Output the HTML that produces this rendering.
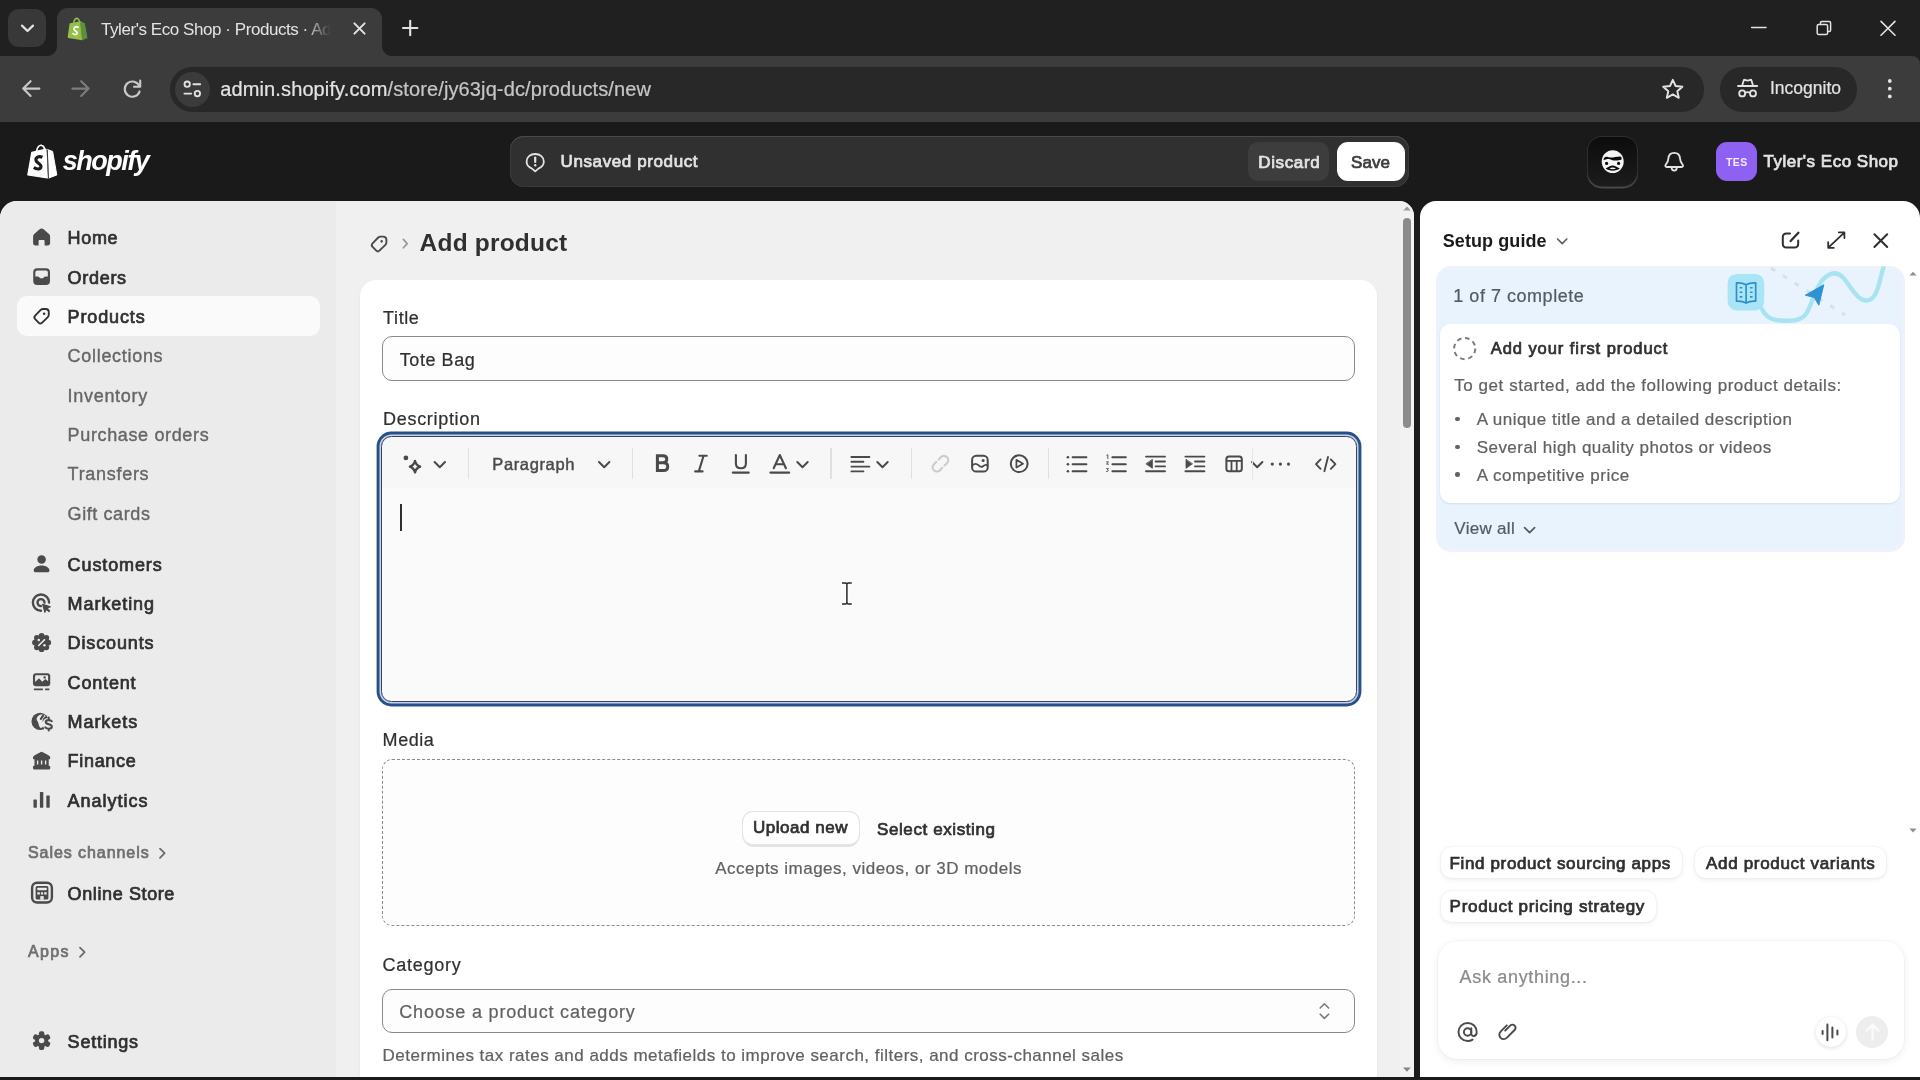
<!DOCTYPE html>
<html>
<head>
<meta charset="utf-8">
<title>Tyler's Eco Shop · Products · Add product</title>
<style>
*{box-sizing:border-box;margin:0;padding:0}
html,body{width:1920px;height:1080px;overflow:hidden;background:#1a1a1a;font-family:"Liberation Sans",sans-serif;}
.a,.t{position:absolute}
.t{white-space:nowrap}
#texts{left:0;top:0;width:1920px;height:1080px;will-change:transform}
#tabtitle{will-change:transform}
svg{display:block;overflow:visible;position:absolute}
/* ---------- browser chrome ---------- */
#tabstrip{left:0;top:0;width:1920px;height:70px;background:#202020}
#tabsearch{left:8px;top:9px;width:38px;height:38px;border-radius:11px;background:#383838}
#tab{left:57px;top:8px;width:325px;height:48px;background:#3c3c3c;border-radius:11px 11px 0 0}
#tab:before,#tab:after{content:"";position:absolute;bottom:0;width:10px;height:10px}
#tab:before{left:-10px;background:radial-gradient(circle at 0 0,transparent 9.5px,#3c3c3c 10.5px)}
#tab:after{right:-10px;background:radial-gradient(circle at 100% 0,transparent 9.5px,#3c3c3c 10.5px)}
#tabtitle{left:100.800px;top:19.7px;font-size:17px;color:#e3e3e3;white-space:nowrap;width:232px;overflow:hidden;letter-spacing:-0.44px;line-height:20px;-webkit-mask-image:linear-gradient(90deg,#000 88%,transparent 99%)}
#toolbar{left:0;top:55.7px;width:1920px;height:66.8px;background:#3c3c3c;border-radius:0 8px 0 0}
#omni{left:170px;top:67.2px;width:1534px;height:44.8px;border-radius:22px;background:#282828}
#siteinfo{left:174.5px;top:72px;width:35px;height:35px;border-radius:50%;background:#3b3b3b}
#incog{left:1720.2px;top:67.2px;width:137.2px;height:44.8px;border-radius:22px;background:#282828}
/* ---------- shopify top bar ---------- */
#topbar{left:0;top:122.5px;width:1920px;height:80px;background:#1a1a1a}
#logotxt{left:61px;top:143px;font-size:27px;font-weight:bold;font-style:italic;color:#fff;letter-spacing:-1.2px;line-height:34px}
#savebar{left:510px;top:136px;width:899px;height:51px;border-radius:14px;background:#303030;box-shadow:inset 0 1px 0 0 #4a4a4a,inset 0 0 0 1px #3a3a3a}
#discard{left:1248px;top:142px;width:81px;height:39px;border-radius:10px;background:#3d3d3d}
#save{left:1337px;top:141.5px;width:68px;height:39.5px;border-radius:11px;background:#fff}
#sidekick{left:1588px;top:137px;width:49px;height:49px;border-radius:14px;background:linear-gradient(180deg,#0c0c0c 0%,#1c1c1c 100%);box-shadow:0 0 0 1px #2e2e2e,0 1.5px 0 1px #4a4a4a}
#avatar{left:1716px;top:142px;width:40.5px;height:39px;border-radius:11px;background:#8f61f2}
/* ---------- frames ---------- */
#frame{left:0;top:200.5px;width:1414.2px;height:876.5px;background:#f0f0f0;border-radius:17px 15px 0 0;overflow:hidden}
#sidebar{left:0;top:0;width:336px;height:877px;background:#ebebeb}
#navsel{left:16.8px;top:95.6px;width:303.2px;height:39.8px;border-radius:10px;background:#fafafa}
#card{left:359.8px;top:79.8px;width:1017.6px;height:820px;border-radius:16px 16px 0 0;background:#fff;box-shadow:0 1px 2px rgba(0,0,0,.08)}
.inp{border:1.3px solid #8a8a8a;border-radius:10px;background:#fdfdfd}
#titleinp{left:382px;top:135.7px;width:973px;height:44.4px}
#editor{left:380.7px;top:235.4px;width:976px;height:266.6px;border-radius:10.5px;border:1.4px solid #3a4252;box-shadow:0 0 0 1.5px #c2d4f0,0 0 0 4.4px #294f87}
#edbg{left:381.2px;top:236px;width:975px;height:265.5px;border-radius:10px;background:#fafafa}
#edtb{left:381.2px;top:236px;width:975px;height:51.5px;background:#f7f7f7;border-radius:10px 10px 0 0}
.sep{width:1.3px;height:31px;top:247.4px;background:#e0e0e0}
#caret{left:400px;top:303px;width:1.6px;height:27px;background:#303030}
#media{left:382px;top:558px;width:973.4px;height:167px;border:1.3px dashed #8c8c8c;border-radius:10px;background:#fdfdfd}
#upbtn{left:743px;top:611px;width:115.5px;height:33px;border-radius:10px;background:#fff;box-shadow:0 0 0 1px #e3e3e3,0 1.5px 0 0 #ccc, inset 0 -1px 0 #e6e6e6}
#catinp{left:382px;top:788px;width:973px;height:44.4px}
#sbtrack{left:1400px;top:0;width:14.2px;height:877px;background:#f2f2f2}
#sbthumb{left:1403px;top:17.2px;width:8.3px;height:210.5px;border-radius:4.2px;background:#8c8c8c}
#panel{left:1419.9px;top:200.5px;width:500.1px;height:876.5px;background:#fff;border-radius:16px 17px 0 0;overflow:hidden}
#guide{left:16.4px;top:65.9px;width:468.6px;height:285.6px;border-radius:15px;background:#e9f3fd;border:3.4px solid #eff2fb}
#gcard{left:20.1px;top:123.5px;width:460px;height:179.3px;border-radius:11px;background:#fff;box-shadow:0 1px 2px rgba(40,80,120,.12)}
.chip{height:31px;border-radius:10px;background:#fff;box-shadow:0 0 1.5px rgba(0,0,0,.10),0 1.5px 5px rgba(0,0,0,.08)}
#ask{left:18.1px;top:740.3px;width:465.8px;height:118.5px;border-radius:20px;background:#fff;box-shadow:0 0 0 1px rgba(0,0,0,.025),0 2px 8px rgba(0,0,0,.08)}
#voice{left:395.8px;top:816.9px;width:30px;height:30px;border-radius:50%;background:#fff;box-shadow:0 1px 4px rgba(0,0,0,.14)}
#send{left:436.6px;top:815.5px;width:32px;height:32px;border-radius:50%;background:#ededed}
.bul{width:4.6px;height:4.6px;border-radius:50%;background:#616161}
</style>
</head>
<body>
<!-- ======= Browser chrome ======= -->
<div id="tabstrip" class="a"></div>
<div id="tabsearch" class="a"></div>
<div id="tab" class="a"></div>
<div id="tabtitle" class="a">Tyler's Eco Shop · Products · Add</div>
<div id="toolbar" class="a"></div>
<div id="omni" class="a"></div>
<div id="siteinfo" class="a"></div>
<div id="incog" class="a"></div>

<!-- ======= Shopify top bar ======= -->
<div id="topbar" class="a"></div>
<div id="savebar" class="a"></div>
<div id="discard" class="a"></div>
<div id="save" class="a"></div>
<div id="sidekick" class="a"></div>
<div id="avatar" class="a"></div>

<!-- ======= Main frame (sidebar + content) ======= -->
<div id="frame" class="a">
  <div id="sidebar" class="a"></div>
  <div id="navsel" class="a"></div>
  <div id="card" class="a"></div>
  <div id="titleinp" class="a inp"></div>
  <div id="edbg" class="a"></div>
  <div id="edtb" class="a"></div>
  <div id="editor" class="a"></div>
  <div class="a sep" style="left:467.8px"></div>
  <div class="a sep" style="left:632px"></div>
  <div class="a sep" style="left:830.4px"></div>
  <div class="a sep" style="left:910.9px"></div>
  <div class="a sep" style="left:1047.8px"></div>
  <div id="caret" class="a"></div>
  <div id="media" class="a"></div>
  <div id="upbtn" class="a"></div>
  <div id="catinp" class="a inp"></div>
  <div id="sbtrack" class="a"></div>
  <div id="sbthumb" class="a"></div>
</div>

<!-- ======= Right panel ======= -->
<div id="panel" class="a">
  <div id="guide" class="a"></div>
  <!--GUIDEART-->
  <div id="gcard" class="a"></div>
  <div class="a bul" style="left:35.4px;top:216.2px"></div>
  <div class="a bul" style="left:35.4px;top:244.1px"></div>
  <div class="a bul" style="left:35.4px;top:271.9px"></div>
  <div class="a chip" style="left:20.7px;top:646.9px;width:241.1px"></div>
  <div class="a chip" style="left:275.3px;top:646.9px;width:191px"></div>
  <div class="a chip" style="left:20.7px;top:690.2px;width:215.4px"></div>
  <div id="ask" class="a"></div>
  <div id="voice" class="a"></div>
  <div id="send" class="a"></div>
</div>

<svg id="ico1" width="1920" height="1080" viewBox="0 0 1920 1080" style="left:0;top:0" fill="none" stroke-linecap="round" stroke-linejoin="round">
<!-- tab search chevron -->
<path d="M22 25.6 L27.5 31 L33 25.6" stroke="#e3e3e3" stroke-width="2.2"/>
<!-- favicon: shopify bag -->
<g transform="translate(0 1.300) scale(1 1.050)">
<path d="M70.2 21.6 L80.6 19.6 L82.4 36.4 L68.4 34.2 Z" fill="#95bf47" stroke="#95bf47" stroke-width="1.4"/>
<path d="M80.6 19.6 L84.4 21.2 L87 34.8 L82.4 36.4 Z" fill="#5e8e3e" stroke="#5e8e3e" stroke-width="1"/>
<path d="M73.6 21 C73.8 17.6 76 15.8 77.6 16.4 C79 17 79.6 19 79.8 20.4" stroke="#95bf47" stroke-width="1.5"/>
<path d="M78 24.6 C75.4 23.6 73.6 25 74 26.6 C74.4 28.2 77.4 28.4 77.2 30.4 C77 32 74.6 32 73 30.8" stroke="#fff" stroke-width="1.7"/>
</g>
<!-- tab close -->
<path d="M354.4 23.4 L364.6 33.6 M364.6 23.4 L354.4 33.6" stroke="#e3e3e3" stroke-width="2"/>
<!-- new tab plus -->
<path d="M403 28 H417.4 M410.2 20.8 V35.2" stroke="#e3e3e3" stroke-width="2.1"/>
<!-- window controls -->
<path d="M1751.6 27.4 H1766" stroke="#e3e3e3" stroke-width="1.5"/>
<rect x="1817.2" y="24.4" width="10.4" height="10.2" rx="1.6" stroke="#e3e3e3" stroke-width="1.5"/>
<path d="M1820.4 24 V23 Q1820.4 21.6 1821.8 21.6 H1829.2 Q1830.6 21.6 1830.6 23 V30.2 Q1830.6 31.6 1829.2 31.6 H1828.2" stroke="#e3e3e3" stroke-width="1.5"/>
<path d="M1881 21.4 L1895 35.2 M1895 21.4 L1881 35.2" stroke="#e3e3e3" stroke-width="1.6"/>
<!-- back -->
<path d="M39.4 88.6 H23.4 M30.6 81.2 L23.2 88.6 L30.6 96" stroke="#c9c9c9" stroke-width="2.1"/>
<!-- forward (disabled) -->
<path d="M72.4 88.6 H88.4 M81.2 81.2 L88.6 88.6 L81.2 96" stroke="#7d7d7d" stroke-width="2.1"/>
<!-- reload -->
<path d="M139.4 86.2 A7.6 7.6 0 1 0 139.6 91.4" stroke="#c9c9c9" stroke-width="2.1"/>
<path d="M140.2 80.6 V86.8 H134" stroke="#c9c9c9" stroke-width="2.1"/>
<!-- site info (tune) -->
<circle cx="187.2" cy="84.2" r="2.7" stroke="#e3e3e3" stroke-width="1.8"/>
<path d="M193.4 84.2 H200.2" stroke="#e3e3e3" stroke-width="1.9"/>
<path d="M184.4 93.6 H191.2" stroke="#e3e3e3" stroke-width="1.9"/>
<circle cx="197.4" cy="93.6" r="2.7" stroke="#e3e3e3" stroke-width="1.8"/>
<!-- star -->
<path d="M1672.8 79.8 L1675.6 86 L1682.4 86.7 L1677.3 91.2 L1678.8 97.8 L1672.8 94.4 L1666.8 97.8 L1668.3 91.2 L1663.2 86.7 L1670 86 Z" stroke="#e3e3e3" stroke-width="1.9"/>
<!-- incognito -->
<g stroke="#e3e3e3" stroke-width="1.8">
<path d="M1742.2 85.6 L1743.8 80.2 Q1744 79.6 1744.8 79.8 L1747.6 80.6 L1750.4 79.8 Q1751.2 79.6 1751.4 80.2 L1753 85.6"/>
<path d="M1738 86 H1757.2"/>
<circle cx="1742.2" cy="93.4" r="3"/>
<circle cx="1753" cy="93.4" r="3"/>
<path d="M1745.2 92.8 Q1747.6 91.6 1750 92.8"/>
</g>
<!-- menu dots -->
<circle cx="1889.8" cy="81" r="1.9" fill="#e3e3e3"/><circle cx="1889.8" cy="88.7" r="1.9" fill="#e3e3e3"/><circle cx="1889.8" cy="96.4" r="1.9" fill="#e3e3e3"/>

<!-- ===== shopify top bar ===== -->
<!-- bag logo -->
<g>
<path d="M31.8 152.4 L46 149.2 L47.4 178 L27.8 174.8 Z" fill="#fff" stroke="#fff" stroke-width="1.2"/>
<path d="M47.6 149.6 L52.6 151.4 L56.8 175 L48.8 178 Z" fill="#fff" stroke="#fff" stroke-width="1"/>
<path d="M36.6 151.2 C37 147.2 39.6 144.6 41.8 145.4 C43.6 146 44.6 148.2 45 150.6" stroke="#fff" stroke-width="1.7"/>
<path d="M47.3 150 L48.4 178" stroke="#1a1a1a" stroke-width="0.9"/>
<path d="M42.4 157.2 C38.6 155.6 35.4 157.6 36 160.4 C36.6 163.2 41.4 163.6 41 166.8 C40.6 169.6 36.6 169.6 33.8 167.6" stroke="#1a1a1a" stroke-width="3.1" stroke-linecap="butt"/>
</g>
<!-- unsaved icon -->
<g stroke="#e3e3e3">
<path d="M535.2 154 C540.2 154 543.8 157.2 543.8 161.6 C543.8 165.4 541.2 167.6 538.4 168.6 L535.2 171.4 L532 168.6 C529.2 167.6 526.6 165.4 526.6 161.6 C526.6 157.2 530.2 154 535.2 154 Z" stroke-width="1.8"/>
<path d="M535.2 157.6 V162" stroke-width="2.2"/>
<circle cx="535.2" cy="165.3" r="1.2" fill="#e3e3e3" stroke="none"/>
</g>
<!-- sidekick face -->
<g>
<ellipse cx="1612.7" cy="161.6" rx="11" ry="11.4" fill="#f4f4f4"/>
<path d="M1603.6 159.2 C1604.2 156.8 1606 156.4 1607 156.8 C1610.6 158.6 1616.6 156.2 1620.4 156.4 C1621.6 156.6 1621.8 158.4 1621.6 159.4 C1618 160.8 1612.6 161 1610 159.2 C1608 158.6 1605.2 159.4 1603.6 160.2 Z" fill="#0c0c0c"/>
<circle cx="1606.6" cy="163.4" r="1.6" fill="#0c0c0c"/>
<circle cx="1618.6" cy="163.4" r="1.6" fill="#0c0c0c"/>
<path d="M1605.6 168.6 C1608 167.2 1610.6 165.8 1612.6 165.6 C1614.6 165.8 1617.4 167.2 1619.8 168.6 C1616.4 171.4 1609 171.4 1605.6 168.6 Z" fill="#0c0c0c"/>
<path d="M1609.4 168.4 Q1612.7 166.8 1616 168.4 Q1612.7 170 1609.4 168.4 Z" fill="#f4f4f4"/>
</g>
<!-- bell -->
<g stroke="#e3e3e3" stroke-width="1.8">
<path d="M1674.2 152.8 C1678 152.8 1679.8 155.4 1680 158.4 C1680.2 161.4 1680.8 162.8 1682.6 164.6 C1683.6 165.8 1683 167 1681.6 167 H1666.8 C1665.4 167 1664.8 165.8 1665.8 164.6 C1667.6 162.8 1668.2 161.4 1668.4 158.4 C1668.6 155.4 1670.4 152.8 1674.2 152.8 Z"/>
<path d="M1671.6 167.6 C1671.6 169.4 1672.8 170.6 1674.2 170.6 C1675.6 170.6 1676.8 169.4 1676.8 167.6"/>
</g>
</svg>

<svg id="ico2" width="1920" height="1080" viewBox="0 0 1920 1080" style="left:0;top:0" fill="none" stroke-linecap="round" stroke-linejoin="round">
<defs>
<path id="tag" fill-rule="evenodd" d="M13 8a1 1 0 1 1-2 0 1 1 0 0 1 2 0Z M11.276 3.5a3.75 3.75 0 0 0-2.701 1.149l-4.254 4.417a2.75 2.75 0 0 0 .036 3.852l2.898 2.898a2.5 2.5 0 0 0 3.502.033l4.747-4.571a3.25 3.25 0 0 0 .996-2.341v-2.187a3.25 3.25 0 0 0-3.25-3.25h-1.974Zm-1.62 2.19a2.25 2.25 0 0 1 1.62-.69h1.974c.966 0 1.75.784 1.75 1.75v2.187c0 .475-.194.93-.536 1.26l-4.747 4.572a1 1 0 0 1-1.401-.014l-2.898-2.898a1.25 1.25 0 0 1-.016-1.75l4.253-4.418Z"/>
<path id="chev" d="M0 0 L5.2 5.2 L10.4 0"/>
</defs>
<!-- ===== sidebar icons (20-unit glyphs at 1.25x) ===== -->
<g fill="#4a4a4a">
<!-- home -->
<g transform="translate(29.1 224.5) scale(1.25)"><path d="M10 3.1c.6 0 1.1.3 1.6.7l4.3 3.7c.6.5.9 1.2.9 2V15c0 1-.8 1.8-1.8 1.8h-2.6v-3.5c0-.5-.4-.9-.9-.9h-3c-.5 0-.9.4-.9.9v3.500H5c-1 0-1.800-.8-1.800-1.800V9.500c0-.8.3-1.500.9-2l4.300-3.700c.5-.4 1-.7 1.600-.7Z"/></g>
<!-- orders -->
<g transform="translate(29.1 264.2) scale(1.25)"><path fill-rule="evenodd" d="M6.5 3.3a3.200 3.200 0 0 0-3.200 3.200v7a3.200 3.200 0 0 0 3.200 3.200h7a3.200 3.200 0 0 0 3.200-3.200v-7a3.200 3.200 0 0 0-3.200-3.200h-7Zm-1.500 3.200A1.500 1.500 0 0 1 6.500 5h7A1.500 1.500 0 0 1 15 6.500v3.300h-1.900a1.500 1.500 0 0 0-1.060.44l-.5.5a1.500 1.500 0 0 1-1.060.44h-.96a1.500 1.500 0 0 1-1.060-.44l-.5-.5a1.500 1.500 0 0 0-1.060-.44H5V6.500Z"/></g>
<!-- products tag -->
<g transform="translate(29.1 303.700) scale(1.25)" fill="#303030"><use href="#tag"/></g>
<!-- customers -->
<g transform="translate(29.1 551.3) scale(1.25)"><circle cx="10" cy="6.500" r="3.400"/><path d="M3.700 15.300c0-2.300 2.800-4 6.300-4s6.300 1.700 6.300 4c0 .9-.7 1.500-1.500 1.500H5.200c-.8 0-1.500-.6-1.500-1.500Z"/></g>
<!-- marketing -->
<g transform="translate(29.1 590.700) scale(1.25)" fill="none" stroke="#4a4a4a" stroke-width="1.900"><path d="M16 9.500a6.500 6.500 0 1 0-6.500 6.500"/><path d="M12.300 9.500a2.800 2.800 0 1 0-2.800 2.800"/><path d="M10.800 10.800l6.200 2.100-2.600 1.200 2 2-.6.600-2-2-1.200 2.600-1.800-6.500Z" fill="#4a4a4a" stroke-width=".9"/></g>
<!-- discounts -->
<g transform="translate(29.1 630.100) scale(1.25)"><circle cx="10" cy="10" r="5.700"/><g id="lobes"><circle cx="10" cy="4.700" r="2.300"/><circle cx="13.750" cy="6.250" r="2.300"/><circle cx="15.300" cy="10" r="2.300"/><circle cx="13.750" cy="13.750" r="2.300"/><circle cx="10" cy="15.300" r="2.300"/><circle cx="6.250" cy="13.750" r="2.300"/><circle cx="4.700" cy="10" r="2.300"/><circle cx="6.250" cy="6.250" r="2.300"/></g><path d="M7.700 12.300l4.600-4.600" stroke="#ebebeb" stroke-width="1.300"/><circle cx="7.700" cy="7.900" r="1" fill="#ebebeb"/><circle cx="12.300" cy="12.100" r="1" fill="#ebebeb"/></g>
<!-- content -->
<g transform="translate(29.1 669.500) scale(1.25)"><rect x="3.100" y="2.900" width="13.800" height="10.400" rx="2.400"/><path d="M4.800 5.500c0-.5.400-.9.900-.9h8.600c.5 0 .9.400.9.900v3.900l-2.200-1.900-2.500 2.300-2.600-2.900-3.100 3.100Z" fill="#ebebeb"/><circle cx="12.400" cy="6.300" r=".95"/><path d="M3.800 15.900h7.200M12.800 15.900h3.400" stroke="#4a4a4a" stroke-width="1.300" stroke-linecap="butt"/></g>
<!-- markets -->
<g transform="translate(29.1 708.900) scale(1.25)"><circle cx="8.800" cy="10" r="6.900"/><path d="M9.600 4.500c1.700-.3 3.600.3 3.700 1.200-1 .9-2.200 1.900-2.500 3.200-.3 1.400.7 2.300.6 3.700-.1 1.200-.8 2.500-2.100 2.700-1.500-.9-1.400-2.700-1.900-4.100-.4-1.300-1.600-2-1.400-3.500.2-1.500 1.900-2.900 3.600-3.200Z" fill="#ebebeb"/><path d="M11.300 5.200l-1.900 2.800" stroke="#4a4a4a" stroke-width="1.700"/><circle cx="15.600" cy="12.100" r="5" fill="#ebebeb"/><path d="M18.100 9.900c-.8-1.200-4.700-1.500-4.800.6-.1 2.300 5 1.300 4.900 3.700-.1 2.300-4.100 2-5.200.6M15.700 7v1.300M15.700 16v1.300" fill="none" stroke="#4a4a4a" stroke-width="1.650"/></g>
<!-- finance -->
<g transform="translate(29.1 748.300) scale(1.25)"><path d="M9.400 2.900a1.200 1.200 0 0 1 1.200 0c2.600 1.300 4.800 2.400 5.700 3.300.4.300.6.700.6 1.100v.7c0 .4-.3.700-.7.700H3.800c-.4 0-.7-.3-.7-.7v-.7c0-.4.200-.8.600-1.100.9-.9 3.100-2 5.700-3.300Z"/><rect x="4.300" y="8.400" width="11.400" height="5.800"/><path d="M6.800 9.800v3.200M10 9.800v3.200M13.200 9.800v3.200" stroke="#ebebeb" stroke-width="1.100" stroke-linecap="butt"/><rect x="3.100" y="13.900" width="13.800" height="3" rx=".9"/></g>
<!-- analytics -->
<g transform="translate(29.1 787.700) scale(1.25)"><rect x="3.500" y="9.500" width="2.700" height="6.500" rx=".5"/><rect x="8.650" y="3.400" width="2.700" height="12.600" rx=".5"/><rect x="13.800" y="6.300" width="2.700" height="9.700" rx=".5"/></g>
<!-- settings gear -->
<g transform="translate(41.6 1040.600)"><g id="teeth"><rect x="-2.700" y="-9.300" width="5.400" height="18.600" rx="1.900"/><rect x="-2.700" y="-9.300" width="5.400" height="18.600" rx="1.900" transform="rotate(60)"/><rect x="-2.700" y="-9.300" width="5.400" height="18.600" rx="1.900" transform="rotate(120)"/></g><circle r="6.600"/><circle r="2.700" fill="#ebebeb"/></g>
</g>
<!-- online store -->
<g>
<rect x="32.100" y="882.700" width="19.800" height="19.800" rx="5" stroke="#4a4a4a" stroke-width="2.400"/>
<rect x="35.600" y="886.100" width="12.800" height="13.400" rx="1.600" fill="#4a4a4a"/>
<rect x="37.300" y="887.700" width="9.400" height="2.500" rx=".600" fill="#ebebeb"/>
<path d="M37.300 892.200h9.400v2.300h-9.400Z" fill="#ebebeb"/>
<path d="M40.400 892.200v2.300M43.600 892.200v2.300" stroke="#4a4a4a" stroke-width="1.100"/>
<rect x="40.300" y="896.100" width="3.400" height="3.600" fill="#ebebeb"/>
</g>
<!-- sales channels / apps chevrons -->
<path d="M160 848.600l4.600 4.600-4.600 4.600" stroke="#6b6b6b" stroke-width="1.800"/>
<path d="M80 947.600l4.600 4.600-4.600 4.600" stroke="#6b6b6b" stroke-width="1.800"/>

<!-- ===== breadcrumb ===== -->
<g transform="translate(366.400 231.200) scale(1.27)" fill="#4a4a4a"><use href="#tag"/></g>
<path d="M403.400 239.400l3.800 4.200-3.800 4.200" stroke="#9a9a9a" stroke-width="1.700"/>

<!-- ===== editor toolbar ===== -->
<g stroke="#4a4a4a" stroke-width="2">
<!-- magic sparkle -->
<path d="M415 461c.7 3 2.100 4.500 5.100 5.700-3 1.200-4.400 2.700-5.100 5.700-.7-3-2.100-4.500-5.100-5.700 3-1.200 4.400-2.700 5.100-5.700Z" stroke-width="2.400"/>
<circle cx="405.900" cy="457.900" r="2.350" fill="#4a4a4a" stroke="none"/>
<use href="#chev" transform="translate(434.600 462)" />
<use href="#chev" transform="translate(599 462)" />
<!-- B -->
<path d="M657.400 455.700h5.400c2.500 0 4 1.400 4 3.500s-1.500 3.600-4 3.600h-5.400h6.100c2.700 0 4.200 1.600 4.200 3.900s-1.500 3.900-4.200 3.900h-6.100Z" stroke-width="3" stroke-linejoin="miter"/>
<!-- I -->
<path d="M699.400 455.800h7.400M695.200 471.400h7.400M703.600 455.800l-4.800 15.600" stroke-width="2.100"/>
<!-- U -->
<path d="M735.900 455v8.400c0 3 1.900 4.800 5 4.800s5-1.800 5-4.800V455M732.800 472.600h16" stroke-width="2.100"/>
<!-- A -->
<path d="M773.700 468.200l6.100-13.200 6.100 13.200M775.900 464.200h7.800M770.400 472.600h18.800" stroke-width="2.100"/>
<use href="#chev" transform="translate(797.300 462)" />
<!-- align -->
<path d="M851.400 457h18M851.400 461.800h12M851.400 466.600h18M851.400 471.400h12" stroke-width="1.900"/>
<use href="#chev" transform="translate(877.300 462)" />
</g>
<!-- link (disabled) -->
<g stroke="#cccccc" stroke-width="2.100">
<path d="M938.600 459.600l2.200-2.400c1.700-1.800 4.400-1.800 6.100-.1s1.700 4.400 0 6.100l-2.400 2.300"/>
<path d="M942.200 467.800l-2.200 2.400c-1.700 1.800-4.400 1.800-6.100.1s-1.700-4.400 0-6.100l2.400-2.300"/>
</g>
<g stroke="#4a4a4a" stroke-width="2">
<!-- image -->
<rect x="972.100" y="455.800" width="15.600" height="15.800" rx="4.200"/>
<path d="M972.400 465.200c2.200-1.800 4.200-1.800 6 0s3 2.400 4.600 1 3-1.800 4.600-.8" stroke-width="1.800"/>
<circle cx="983.100" cy="460.500" r="1.500" fill="#4a4a4a" stroke="none"/>
<!-- play -->
<circle cx="1019.200" cy="463.700" r="8.400"/>
<path d="M1016.400 459.800l6.600 3.900-6.600 3.900Z" stroke-width="1.700"/>
<!-- bullet list -->
<path d="M1072.600 457.200h13.800M1072.600 464.200h13.800M1072.600 471.200h13.800"/>
<circle cx="1067.900" cy="457.200" r="1.300" fill="#4a4a4a" stroke="none"/><circle cx="1067.900" cy="464.200" r="1.300" fill="#4a4a4a" stroke="none"/><circle cx="1067.900" cy="471.200" r="1.300" fill="#4a4a4a" stroke="none"/>
<!-- numbered list -->
<path d="M1112.400 457.200h13.400M1112.400 464.200h13.400M1112.400 471.200h13.400"/>
<path d="M1106.800 455.400l1-.8v4M1106.600 461.800h1.800l-1.800 2.400h1.900M1106.600 468.600h1.800l-1 1.300c1.300 0 1.300 1.900-.9 1.700" stroke-width=".9"/>
<!-- outdent -->
<path d="M1146 456.600h19M1155.600 461.500h9.400M1155.600 466.400h9.400M1146 471.300h19" stroke-width="1.900"/>
<path d="M1152.400 459.700v8.600l-6.200-4.300Z" fill="#4a4a4a" stroke-width=".8"/>
<!-- indent -->
<path d="M1185.400 456.600h19M1195 461.500h9.400M1195 466.400h9.400M1185.400 471.300h19" stroke-width="1.900"/>
<path d="M1186 459.700v8.600l6.200-4.300Z" fill="#4a4a4a" stroke-width=".8"/>
<!-- table -->
<rect x="1226.400" y="456.500" width="15.400" height="14.800" rx="2.600"/>
<path d="M1226.600 460.800h15M1231.500 461v10M1236.700 461v10" stroke-width="1.800"/>
<use href="#chev" transform="translate(1252 462)" />
<!-- more -->
<circle cx="1272.300" cy="464.100" r="1.600" fill="#4a4a4a" stroke="none"/><circle cx="1280.400" cy="464.100" r="1.600" fill="#4a4a4a" stroke="none"/><circle cx="1288.500" cy="464.100" r="1.600" fill="#4a4a4a" stroke="none"/>
<!-- code -->
<path d="M1320.600 459.400l-4.600 4.700 4.600 4.700M1330.800 459.400l4.600 4.700-4.600 4.700M1328 457l-3.600 14.200" stroke-width="1.900"/>
</g>
<path d="M1252.500 448v31" stroke="#e6e6e6" stroke-width="1"/>
<!-- category select icon -->
<path d="M1320.200 1008l4.200-4.200 4.200 4.200M1320.200 1014.200l4.200 4.200 4.200-4.200" stroke="#7a7a7a" stroke-width="1.600"/>
<!-- scrollbar arrows -->
<path d="M1403.200 210.600l3.800-4.200 3.800 4.200Z" fill="#9c9c9c"/>
<path d="M1403 1067.600l3.900 4.200 3.900-4.200Z" fill="#858585"/>
<!-- mouse I-beam cursor -->
<path d="M842 582.900h3.600l1.300 1.100 1.300-1.100h3.600M846.900 584v19M842 604.100h3.600l1.300-1.100 1.300 1.100h3.600" stroke="#fff" stroke-width="3.400" opacity=".8"/>
<path d="M842 582.900h3.600l1.300 1.100 1.300-1.100h3.600M846.900 584v19M842 604.100h3.600l1.300-1.100 1.300 1.100h3.600" stroke="#262626" stroke-width="1.500" stroke-linecap="butt"/>
</svg>

<svg id="ico3" width="1920" height="1080" viewBox="0 0 1920 1080" style="left:0;top:0" fill="none" stroke-linecap="round" stroke-linejoin="round">
<!-- setup guide chevron -->
<path d="M1557.600 239l4.600 4.600 4.600-4.600" stroke="#616161" stroke-width="1.700"/>
<!-- compose -->
<g stroke="#303030" stroke-width="2">
<path d="M1790 233.400h-3.400c-2.300 0-3.800 1.500-3.800 3.800v6.600c0 2.300 1.500 3.800 3.800 3.800h7.800c2.300 0 3.800-1.500 3.800-3.800v-3.400"/>
<path d="M1790.600 241l7.800-8.200" stroke-width="2.300"/>
<!-- expand -->
<path d="M1828.600 247.400l15.400-14.600M1838.800 232.400h5.600v5.600M1833.800 247.800h-5.600v-5.600" stroke-width="1.800"/>
<!-- close -->
<path d="M1874.400 234.200l12.800 12.800M1887.200 234.200l-12.800 12.800" stroke-width="2"/>
</g>
<!-- guide art -->
<clipPath id="gclip"><rect x="1436.700" y="266.600" width="468.500" height="285" rx="14"/></clipPath>
<g clip-path="url(#gclip)">
<path d="M1771 268l74 47" stroke="#cfe4ea" stroke-width="3" stroke-dasharray="5 9" stroke-linecap="butt"/>
<path d="M1762 309c3 7 8 11 18 11.500s22 1 27-8 9-26 16-33 14-8 20-2 12 19 19 22 12-1 15-9 4-16 7-25" stroke="#a8e3f2" stroke-width="4.400"/>
<rect x="1727.600" y="273.900" width="36.600" height="36.600" rx="9" fill="#a9e5f7"/>
<g stroke="#2f8fcb" stroke-width="1.700">
<path d="M1746.100 284.800c-2.800-1.700-6-2.200-9.600-1.900v18.300c3.600-.3 6.800.2 9.600 1.900 2.800-1.700 6-2.200 9.600-1.900v-18.300c-3.600-.3-6.800.2-9.600 1.900ZM1746.100 284.800v18.300"/>
<path d="M1740.300 287.700h1.400M1740.300 292.300h1.400M1740.300 296.900h1.400M1750.600 287.700h1.400M1750.600 292.300h1.400M1750.600 296.900h1.400" stroke-width="1.600"/>
</g>
<path d="M1805.600 295l18.200-10.300-5 20.600-4.400-7.600Z" fill="#2f93d2" stroke="#2f93d2" stroke-width="1"/>
</g>
<!-- dashed circle -->
<circle cx="1464.700" cy="348.600" r="10.600" stroke="#7c7c7c" stroke-width="2" stroke-dasharray="4.600 3.730" stroke-linecap="butt"/>
<!-- view all chevron -->
<path d="M1524.600 527.600l5 5 5-5" stroke="#4f5b66" stroke-width="1.700"/>
<!-- scroll arrows -->
<path d="M1909.400 275.600l3.600-3.800 3.600 3.800Z" fill="#8f8f8f"/>
<path d="M1909.400 828.600l3.600 3.800 3.600-3.800Z" fill="#8f8f8f"/>
<!-- @ -->
<g stroke="#4a4a4a" stroke-width="1.900">
<circle cx="1467.600" cy="1032" r="3.700"/>
<path d="M1471.300 1028.300v5.300c0 3.600 5.400 3.400 5.400-1.600 0-5.200-4-9-9.100-9s-9.100 4-9.100 9 4 9 9.100 9c2 0 3.600-.5 5-1.400"/>
<!-- paperclip -->
<path d="M1505.200 1030.600l5-5c3-3 7.400 1.400 4.400 4.400l-7.600 7.600c-4.400 4.400-10.600-1.800-6.200-6.200l6-6" />
</g>
<!-- voice bars -->
<path d="M1822.600 1031v3M1827.400 1024.600v15.600M1832.400 1027.400v10M1837.400 1030.400v4.200" stroke="#4a4a4a" stroke-width="2"/>
<!-- send arrow -->
<path d="M1872.500 1039.600v-14.600M1866.500 1030.600l6-6 6 6" stroke="#fafafa" stroke-width="2.400"/>
</svg>

<!-- ======= Texts ======= -->
<div id="texts" class="a">
<div class="t" style="left:220.3px;top:78.7px;font-size:20px;line-height:20px;-webkit-text-stroke:.22px;color:#e3e3e3;letter-spacing:0.116px;">admin.shopify.com<span style="color:#c4c7c5">/store/jy63jq-dc/products/new</span></div>
<div class="t" style="left:1770.0px;top:79.8px;font-size:17.5px;line-height:17.5px;-webkit-text-stroke:.22px;color:#e3e3e3;letter-spacing:-0.003px;">Incognito</div>
<div class="t" style="left:62.7px;top:148.4px;font-size:27px;line-height:27px;font-weight:bold;color:#fff;letter-spacing:-1.486px;font-style:italic;">shopify</div>
<div class="t" style="left:560.6px;top:152.8px;font-size:17px;line-height:17px;-webkit-text-stroke:.72px;color:#e3e3e3;letter-spacing:0.599px;">Unsaved product</div>
<div class="t" style="left:1258.3px;top:153.9px;font-size:17px;line-height:17px;-webkit-text-stroke:.72px;color:#e3e3e3;letter-spacing:0.625px;">Discard</div>
<div class="t" style="left:1351.0px;top:153.9px;font-size:17px;line-height:17px;-webkit-text-stroke:.72px;color:#3c3c3c;letter-spacing:0.063px;">Save</div>
<div class="t" style="left:1763.5px;top:152.8px;font-size:17px;line-height:17px;-webkit-text-stroke:.72px;color:#e3e3e3;letter-spacing:0.498px;">Tyler&#x27;s Eco Shop</div>
<div class="t" style="left:1726.0px;top:156.7px;font-size:10.5px;line-height:10.5px;font-weight:bold;color:#f3e8ff;letter-spacing:0.360px;">TES</div>
<div class="t" style="left:67.6px;top:229.2px;font-size:18px;line-height:18px;-webkit-text-stroke:.72px;color:#303030;letter-spacing:0.671px;">Home</div>
<div class="t" style="left:67.6px;top:268.6px;font-size:18px;line-height:18px;-webkit-text-stroke:.72px;color:#303030;letter-spacing:0.698px;">Orders</div>
<div class="t" style="left:67.6px;top:307.9px;font-size:18px;line-height:18px;-webkit-text-stroke:.72px;color:#303030;letter-spacing:0.871px;">Products</div>
<div class="t" style="left:67.6px;top:555.5px;font-size:18px;line-height:18px;-webkit-text-stroke:.72px;color:#303030;letter-spacing:0.887px;">Customers</div>
<div class="t" style="left:67.6px;top:594.9px;font-size:18px;line-height:18px;-webkit-text-stroke:.72px;color:#303030;letter-spacing:0.930px;">Marketing</div>
<div class="t" style="left:67.6px;top:634.2px;font-size:18px;line-height:18px;-webkit-text-stroke:.72px;color:#303030;letter-spacing:0.863px;">Discounts</div>
<div class="t" style="left:67.6px;top:673.6px;font-size:18px;line-height:18px;-webkit-text-stroke:.72px;color:#303030;letter-spacing:0.822px;">Content</div>
<div class="t" style="left:67.6px;top:713.0px;font-size:18px;line-height:18px;-webkit-text-stroke:.72px;color:#303030;letter-spacing:0.927px;">Markets</div>
<div class="t" style="left:67.6px;top:752.3px;font-size:18px;line-height:18px;-webkit-text-stroke:.72px;color:#303030;letter-spacing:0.680px;">Finance</div>
<div class="t" style="left:67.6px;top:791.7px;font-size:18px;line-height:18px;-webkit-text-stroke:.72px;color:#303030;letter-spacing:0.997px;">Analytics</div>
<div class="t" style="left:67.6px;top:884.8px;font-size:18px;line-height:18px;-webkit-text-stroke:.72px;color:#303030;letter-spacing:0.612px;">Online Store</div>
<div class="t" style="left:67.6px;top:1032.5px;font-size:18px;line-height:18px;-webkit-text-stroke:.72px;color:#303030;letter-spacing:0.783px;">Settings</div>
<div class="t" style="left:67.6px;top:347.3px;font-size:18px;line-height:18px;-webkit-text-stroke:.22px;color:#666;letter-spacing:0.696px;-webkit-text-stroke:.38px;">Collections</div>
<div class="t" style="left:67.6px;top:386.7px;font-size:18px;line-height:18px;-webkit-text-stroke:.22px;color:#666;letter-spacing:0.696px;-webkit-text-stroke:.38px;">Inventory</div>
<div class="t" style="left:67.6px;top:426.1px;font-size:18px;line-height:18px;-webkit-text-stroke:.22px;color:#666;letter-spacing:0.642px;-webkit-text-stroke:.38px;">Purchase orders</div>
<div class="t" style="left:67.6px;top:465.4px;font-size:18px;line-height:18px;-webkit-text-stroke:.22px;color:#666;letter-spacing:0.706px;-webkit-text-stroke:.38px;">Transfers</div>
<div class="t" style="left:67.6px;top:504.8px;font-size:18px;line-height:18px;-webkit-text-stroke:.22px;color:#666;letter-spacing:0.588px;-webkit-text-stroke:.38px;">Gift cards</div>
<div class="t" style="left:28.0px;top:844.6px;font-size:16px;line-height:16px;-webkit-text-stroke:.72px;color:#707070;letter-spacing:0.935px;">Sales channels</div>
<div class="t" style="left:28.1px;top:944.3px;font-size:16px;line-height:16px;-webkit-text-stroke:.72px;color:#707070;letter-spacing:1.283px;">Apps</div>
<div class="t" style="left:419.6px;top:230.6px;font-size:24.5px;line-height:24.5px;font-weight:bold;color:#303030;letter-spacing:0.190px;">Add product</div>
<div class="t" style="left:383.1px;top:308.6px;font-size:18px;line-height:18px;-webkit-text-stroke:.22px;color:#303030;letter-spacing:0.613px;">Title</div>
<div class="t" style="left:399.8px;top:350.7px;font-size:18px;line-height:18px;-webkit-text-stroke:.22px;color:#303030;letter-spacing:0.556px;">Tote Bag</div>
<div class="t" style="left:383.1px;top:409.5px;font-size:18px;line-height:18px;-webkit-text-stroke:.22px;color:#303030;letter-spacing:0.688px;">Description</div>
<div class="t" style="left:492.3px;top:455.6px;font-size:16.5px;line-height:16.5px;-webkit-text-stroke:.22px;color:#4a4a4a;letter-spacing:0.627px;-webkit-text-stroke:.45px;">Paragraph</div>
<div class="t" style="left:382.6px;top:730.8px;font-size:18px;line-height:18px;-webkit-text-stroke:.22px;color:#303030;letter-spacing:0.555px;">Media</div>
<div class="t" style="left:753.0px;top:819.3px;font-size:17px;line-height:17px;-webkit-text-stroke:.72px;color:#303030;letter-spacing:0.532px;">Upload new</div>
<div class="t" style="left:877.0px;top:820.8px;font-size:17px;line-height:17px;-webkit-text-stroke:.72px;color:#303030;letter-spacing:0.599px;">Select existing</div>
<div class="t" style="left:715.2px;top:860.0px;font-size:17px;line-height:17px;-webkit-text-stroke:.22px;color:#616161;letter-spacing:0.488px;">Accepts images, videos, or 3D models</div>
<div class="t" style="left:382.6px;top:955.5px;font-size:18px;line-height:18px;-webkit-text-stroke:.22px;color:#303030;letter-spacing:0.733px;">Category</div>
<div class="t" style="left:399.3px;top:1002.6px;font-size:18px;line-height:18px;-webkit-text-stroke:.22px;color:#616161;letter-spacing:0.807px;">Choose a product category</div>
<div class="t" style="left:382.6px;top:1047.1px;font-size:17px;line-height:17px;-webkit-text-stroke:.22px;color:#616161;letter-spacing:0.486px;">Determines tax rates and adds metafields to improve search, filters, and cross-channel sales</div>
<div class="t" style="left:1442.7px;top:231.8px;font-size:18px;line-height:18px;font-weight:bold;color:#1a1a1a;letter-spacing:0.091px;">Setup guide</div>
<div class="t" style="left:1453.3px;top:287.1px;font-size:18px;line-height:18px;-webkit-text-stroke:.22px;color:#4f5b66;letter-spacing:0.528px;">1 of 7 complete</div>
<div class="t" style="left:1490.7px;top:340.0px;font-size:16.5px;line-height:16.5px;-webkit-text-stroke:.72px;color:#303030;letter-spacing:0.944px;">Add your first product</div>
<div class="t" style="left:1454.3px;top:376.6px;font-size:17px;line-height:17px;-webkit-text-stroke:.22px;color:#616161;letter-spacing:0.547px;">To get started, add the following product details:</div>
<div class="t" style="left:1476.7px;top:410.6px;font-size:17px;line-height:17px;-webkit-text-stroke:.22px;color:#616161;letter-spacing:0.484px;">A unique title and a detailed description</div>
<div class="t" style="left:1476.7px;top:438.9px;font-size:17px;line-height:17px;-webkit-text-stroke:.22px;color:#616161;letter-spacing:0.464px;">Several high quality photos or videos</div>
<div class="t" style="left:1476.7px;top:466.6px;font-size:17px;line-height:17px;-webkit-text-stroke:.22px;color:#616161;letter-spacing:0.547px;">A competitive price</div>
<div class="t" style="left:1454.3px;top:519.9px;font-size:17px;line-height:17px;-webkit-text-stroke:.22px;color:#4f5b66;letter-spacing:0.304px;">View all</div>
<div class="t" style="left:1449.6px;top:854.6px;font-size:17px;line-height:17px;-webkit-text-stroke:.72px;color:#303030;letter-spacing:0.625px;">Find product sourcing apps</div>
<div class="t" style="left:1706.0px;top:854.6px;font-size:17px;line-height:17px;-webkit-text-stroke:.72px;color:#303030;letter-spacing:0.674px;">Add product variants</div>
<div class="t" style="left:1449.6px;top:898.0px;font-size:17px;line-height:17px;-webkit-text-stroke:.72px;color:#303030;letter-spacing:0.701px;">Product pricing strategy</div>
<div class="t" style="left:1459.6px;top:967.6px;font-size:18px;line-height:18px;-webkit-text-stroke:.22px;color:#8a8a8a;letter-spacing:0.669px;">Ask anything...</div>
</div>
</body>
</html>
